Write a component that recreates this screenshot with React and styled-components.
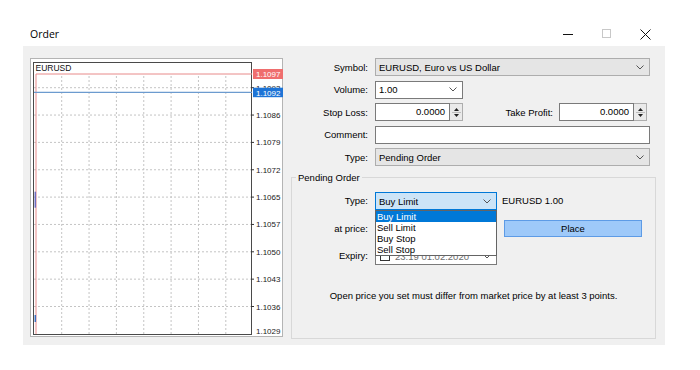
import React from 'react';
import styled, { createGlobalStyle } from 'styled-components';

const GlobalStyle = createGlobalStyle`
  html, body {
    margin: 0;
    padding: 0;
    background: #ffffff;
  }
  body {
    font-family: "Liberation Sans", Arial, sans-serif;
    font-size: 9.5px;
    color: #000;
  }
`;

const gridY = [0, 1, 2, 3, 4, 5, 6, 7, 8].map((i) => 29.7 + 27.35 * i);
const gridX = [0, 1, 2, 3, 4, 5, 6].map((i) => 31.7 + 27.35 * i);
const prices = ['1.1093', '1.1086', '1.1079', '1.1072', '1.1065', '1.1057', '1.1050', '1.1043', '1.1036'];

const Chevron = () => (
  <svg width="8" height="5" viewBox="0 0 8 5">
    <path d="M0.5 0.5 L4 4 L7.5 0.5" fill="none" stroke="#555" strokeWidth="1" />
  </svg>
);

const Spinner = () => (
  <SpinBox>
    <svg width="11" height="15" viewBox="0 0 11 15">
      <path d="M3 6 L5.5 3 L8 6 Z" fill="#222" />
      <line x1="1" y1="7.5" x2="10" y2="7.5" stroke="#bdbdbd" />
      <path d="M3 9 L5.5 12 L8 9 Z" fill="#222" />
    </svg>
  </SpinBox>
);

const Chart = () => (
  <svg width="253" height="279" viewBox="0 0 253 279">
    <rect x="0.5" y="0.5" width="252" height="278" fill="#fff" stroke="#b4b4b4" />
    <rect x="3.5" y="4.5" width="218" height="272" fill="#fff" stroke="#4a4a4a" />
    {gridY.map((y) => (
      <line key={'h' + y} x1="4" x2="221" y1={y} y2={y} stroke="#c4c4c4" strokeDasharray="2 2" />
    ))}
    {gridX.map((x) => (
      <line key={'v' + x} x1={x} x2={x} y1="18" y2="276" stroke="#c4c4c4" strokeDasharray="2 2" />
    ))}
    {gridY.map((y) => (
      <line key={'t' + y} x1="221" x2="224" y1={y} y2={y} stroke="#333" />
    ))}
    {prices.map((p, i) => (
      <text key={p} x="226" y={gridY[i] + 3} fontSize="8" fontFamily="Liberation Sans, Arial, sans-serif" fill="#222">
        {p}
      </text>
    ))}
    <text x="226" y="276" fontSize="8" fontFamily="Liberation Sans, Arial, sans-serif" fill="#222">1.1029</text>
    <text x="5.5" y="13.3" fontSize="8.5" fontFamily="Liberation Sans, Arial, sans-serif" fill="#111">EURUSD</text>
    <line x1="6" x2="222" y1="16" y2="16" stroke="#e88a8a" />
    <line x1="6" x2="6" y1="16" y2="276" stroke="#e88a8a" />
    <line x1="4" x2="222" y1="34.3" y2="34.3" stroke="#6c9bcf" strokeWidth="1.2" />
    <line x1="5.3" x2="5.3" y1="133.7" y2="149.7" stroke="#6c6cc0" strokeWidth="1.5" />
    <line x1="5.3" x2="5.3" y1="257" y2="264" stroke="#3b6fc0" strokeWidth="1.5" />
    <rect x="223" y="11" width="30" height="10" fill="#ef6e6e" />
    <text x="226" y="19" fontSize="8" fontFamily="Liberation Sans, Arial, sans-serif" fill="#fff">1.1097</text>
    <rect x="223" y="29.7" width="30" height="9.5" fill="#1e74d6" />
    <text x="226" y="37.5" fontSize="8" fontFamily="Liberation Sans, Arial, sans-serif" fill="#fff">1.1092</text>
  </svg>
);

const App = () => {
  return (
    <>
      <GlobalStyle />
      <Window>
        <TitleBar>
          <Title>Order</Title>
          <Controls>
            <ControlButton>
              <svg width="10" height="10" viewBox="0 0 10 10">
                <line x1="0" x2="10" y1="5.5" y2="5.5" stroke="#111" />
              </svg>
            </ControlButton>
            <ControlButton>
              <svg width="10" height="10" viewBox="0 0 10 10">
                <rect x="0.5" y="0.5" width="8" height="8" fill="none" stroke="#c8c8c8" />
              </svg>
            </ControlButton>
            <ControlButton>
              <svg width="11" height="11" viewBox="0 0 11 11">
                <path d="M0.5 0.5 L10.5 10.5 M10.5 0.5 L0.5 10.5" stroke="#111" strokeWidth="1" />
              </svg>
            </ControlButton>
          </Controls>
        </TitleBar>
        <Body>
          <ChartFrame>
            <Chart />
          </ChartFrame>
          <FormPane>
            <FieldGrid>
              <Label>Symbol:</Label>
              <Select $tone="gray">
                <span>EURUSD, Euro vs US Dollar</span>
                <Chevron />
              </Select>

              <Label>Volume:</Label>
              <Select $tone="white" $width={88}>
                <span>1.00</span>
                <Chevron />
              </Select>

              <Label>Stop Loss:</Label>
              <InlineRow>
                <SpinField>
                  <NumberBox>0.0000</NumberBox>
                  <Spinner />
                </SpinField>
                <InlineLabel>Take Profit:</InlineLabel>
                <SpinField $trail={3}>
                  <NumberBox>0.0000</NumberBox>
                  <Spinner />
                </SpinField>
              </InlineRow>

              <Label>Comment:</Label>
              <TextBox />

              <Label>Type:</Label>
              <Select $tone="gray">
                <span>Pending Order</span>
                <Chevron />
              </Select>
            </FieldGrid>

            <GroupBox>
              <Legend>Pending Order</Legend>
              <PendingGrid>
                <Label>Type:</Label>
                <DropHolder>
                  <Select $tone="focus">
                    <span>Buy Limit</span>
                    <Chevron />
                  </Select>
                  <DropList>
                    <DropItem $active>Buy Limit</DropItem>
                    <DropItem>Sell Limit</DropItem>
                    <DropItem>Buy Stop</DropItem>
                    <DropItem>Sell Stop</DropItem>
                  </DropList>
                </DropHolder>
                <SideText>EURUSD 1.00</SideText>

                <Label>at price:</Label>
                <TextBox />
                <PlaceButton>Place</PlaceButton>

                <Label>Expiry:</Label>
                <DateField>
                  <CheckBox />
                  <DateText>23:19 01.02.2020</DateText>
                  <Chevron />
                </DateField>
                <span />
              </PendingGrid>
              <Message>Open price you set must differ from market price by at least 3 points.</Message>
            </GroupBox>
          </FormPane>
        </Body>
      </Window>
    </>
  );
};

const Window = styled.div`
  width: 642px;
  margin-left: 23px;
`;

const TitleBar = styled.div`
  height: 46px;
  box-sizing: border-box;
  padding: 24px 0 2px 0;
  display: flex;
  align-items: center;
  justify-content: space-between;
`;

const Title = styled.div`
  padding-left: 7px;
  font-family: "Open Sans", "Noto Sans", sans-serif;
  font-size: 10.5px;
  color: #000;
`;

const Controls = styled.div`
  display: flex;
  height: 100%;
`;

const ControlButton = styled.div`
  width: 39px;
  display: flex;
  align-items: center;
  justify-content: center;
`;

const Body = styled.div`
  background: #f0f0f0;
  height: 299px;
  box-sizing: border-box;
  padding: 12px 9px 0 7px;
  display: flex;
`;

const ChartFrame = styled.div`
  width: 253px;
  height: 279px;
  flex: none;
  svg {
    display: block;
  }
`;

const FormPane = styled.div`
  flex: 1;
  display: flex;
  flex-direction: column;
`;

const FieldGrid = styled.div`
  display: grid;
  grid-template-columns: 85px 1fr;
  grid-auto-rows: 18px;
  column-gap: 7px;
  row-gap: 4.5px;
  padding-right: 6px;
`;

const Label = styled.div`
  text-align: right;
  align-self: center;
  white-space: nowrap;
`;

const tones = {
  gray: { bg: '#e5e5e5', border: '#adadad' },
  white: { bg: '#ffffff', border: '#7a7a7a' },
  focus: { bg: '#cce4f7', border: '#0078d7' },
};

const Select = styled.div`
  box-sizing: border-box;
  height: 18px;
  width: ${(p) => (p.$width ? p.$width + 'px' : '100%')};
  background: ${(p) => tones[p.$tone].bg};
  border: 1px solid ${(p) => tones[p.$tone].border};
  display: flex;
  align-items: center;
  justify-content: space-between;
  padding: 0 5px 0 3px;
  svg {
    flex: none;
  }
`;

const InlineRow = styled.div`
  display: flex;
  align-items: center;
`;

const InlineLabel = styled.div`
  margin-left: auto;
  margin-right: 6px;
`;

const SpinField = styled.div`
  width: 88px;
  height: 18px;
  display: flex;
  margin-right: ${(p) => (p.$trail || 0) + 'px'};
`;

const NumberBox = styled.div`
  flex: 1;
  box-sizing: border-box;
  background: #fff;
  border: 1px solid #7a7a7a;
  text-align: right;
  padding-right: 4px;
  line-height: 16px;
`;

const SpinBox = styled.div`
  width: 13px;
  box-sizing: border-box;
  border: 1px solid #adadad;
  border-left: none;
  background: #eaeaea;
  display: flex;
  align-items: center;
  justify-content: center;
  svg {
    display: block;
  }
`;

const TextBox = styled.div`
  box-sizing: border-box;
  height: 100%;
  background: #fff;
  border: 1px solid #7a7a7a;
`;

const GroupBox = styled.fieldset`
  margin: 6px 0 0 8px;
  height: 167px;
  box-sizing: border-box;
  padding: 0;
  border: 1px solid #d8d8d8;
  min-width: 0;
`;

const Legend = styled.legend`
  margin-left: 4px;
  padding: 0 2px;
  line-height: 11px;
`;

const PendingGrid = styled.div`
  display: grid;
  grid-template-columns: 76px 122px 138px;
  grid-auto-rows: 17.5px;
  column-gap: 7px;
  row-gap: 10px;
  margin-top: 9px;
`;

const DropHolder = styled.div`
  position: relative;
`;

const DropList = styled.div`
  position: absolute;
  top: 100%;
  left: 0;
  width: 100%;
  box-sizing: border-box;
  background: #fff;
  border: 1px solid #646464;
  z-index: 2;
`;

const DropItem = styled.div`
  line-height: 11px;
  padding-left: 1px;
  background: ${(p) => (p.$active ? '#0078d7' : 'transparent')};
  color: ${(p) => (p.$active ? '#fff' : '#000')};
`;

const SideText = styled.div`
  align-self: center;
  margin-left: -2px;
`;

const PlaceButton = styled.div`
  box-sizing: border-box;
  background: #9ec9f9;
  border: 1px solid #5d9be6;
  display: flex;
  align-items: center;
  justify-content: center;
`;

const DateField = styled.div`
  box-sizing: border-box;
  height: 18px;
  background: #fff;
  border: 1px solid #7a7a7a;
  display: flex;
  align-items: center;
  padding: 0 5px 0 4px;
`;

const CheckBox = styled.div`
  width: 10px;
  height: 10px;
  box-sizing: border-box;
  border: 1px solid #333;
  background: #fff;
  flex: none;
`;

const DateText = styled.div`
  flex: 1;
  margin-left: 5px;
  color: #6d6d6d;
`;

const Message = styled.div`
  text-align: center;
  margin-top: 25px;
`;

export default App;
